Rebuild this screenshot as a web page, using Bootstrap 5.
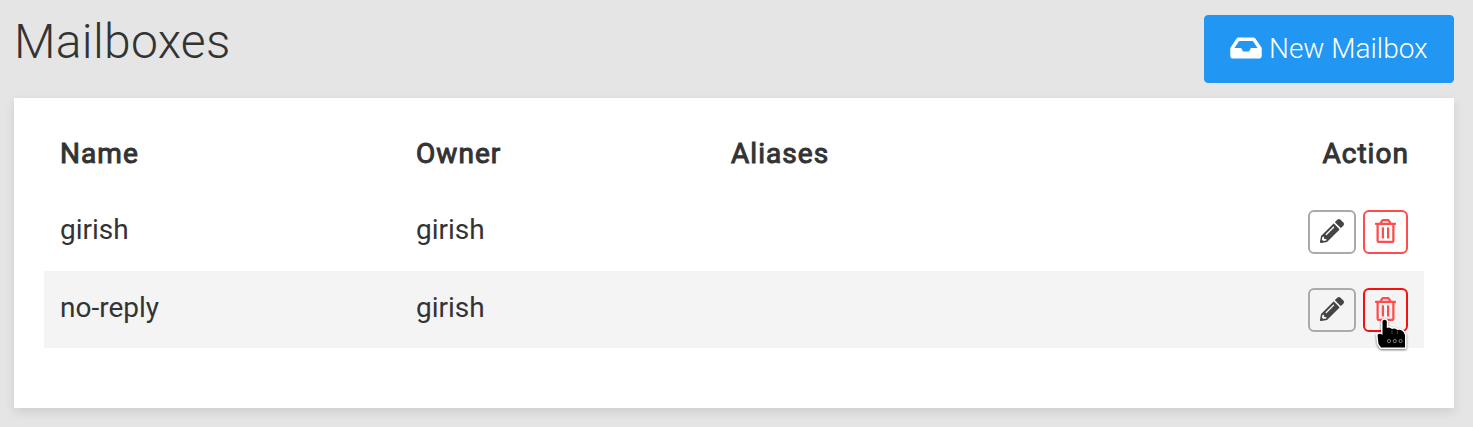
<!DOCTYPE html>
<html lang="en">
<head>
<meta charset="utf-8">
<title>Mailboxes</title>
<link href="https://cdn.jsdelivr.net/npm/bootstrap@5.3.0/dist/css/bootstrap.min.css" rel="stylesheet">
<style>
body{background:#e5e5e5;color:#333;font-family:Roboto,sans-serif;font-size:28px;line-height:40px;overflow:hidden}
.page{padding:15px 19px 19px 14px}
.page-head{height:83px}
h1{font-size:48px;font-weight:300;line-height:53px;letter-spacing:.3px}
.btn-new{--bs-btn-bg:#2196f3;--bs-btn-color:#fff;--bs-btn-border-color:#2196f3;--bs-btn-font-size:28px;--bs-btn-font-weight:300;--bs-btn-line-height:40px;--bs-btn-border-radius:4px;width:250px;height:68px;padding:0 0 0 25px;gap:7px}
.btn-new svg{margin-top:-2px}
.panel{height:310px;padding:30px;border:0;border-radius:0;box-shadow:0 4px 10px rgba(0,0,0,.1)}
.mailboxes{--bs-table-bg:transparent;--bs-table-color:#333;table-layout:fixed;color:#333}
.mailboxes th,.mailboxes td{border:0;padding:0 16px 4px;vertical-align:middle}
.mailboxes .acts{padding-bottom:0}
.mailboxes thead tr{height:65px}
.mailboxes thead th{padding-bottom:14px;font-weight:400;letter-spacing:1.05px;-webkit-text-stroke:1px #333}
.mailboxes thead th.text-end{padding-right:15px}
.mailboxes tbody tr{height:78px}
.mailboxes tbody tr.hovered{background:#f4f4f4;height:77px}
.mailboxes .hovered td{padding-bottom:3px}
.mailboxes .hovered .acts{padding-bottom:0}
.btns{gap:7px}
.btn-act{width:48px;height:44px;padding:0 0 2px;border:2px solid #aaa;border-radius:6px;color:#444;background:transparent}
.btn-del{width:45px;color:#ff4c4c;border-color:#ff4c4c}
.btn-del.hot{border-color:#f60f0f}
.hand{left:9px;top:26px;z-index:2;pointer-events:none;filter:drop-shadow(0 1px 1px rgba(0,0,0,.55))}
svg{display:block;flex:none}
</style>
</head>
<body>
<svg width="0" height="0" class="position-absolute">
<symbol id="pencil" viewBox="0 0 512 512"><path fill="currentColor" d="M497.9 142.1l-46.1 46.1c-4.7 4.7-12.3 4.7-17 0l-111-111c-4.7-4.7-4.7-12.3 0-17l46.1-46.1c18.7-18.7 49.1-18.7 67.9 0l60.1 60.1c18.8 18.7 18.8 49.1 0 67.9zM284.2 99.8L21.6 362.4.4 483.9c-2.9 16.4 11.4 30.6 27.8 27.8l121.5-21.3 262.6-262.6c4.7-4.7 4.7-12.3 0-17l-111-111c-4.8-4.7-12.4-4.7-17.1 0zM124.1 339.9c-5.5-5.5-5.5-14.3 0-19.8l154-154c5.5-5.5 14.3-5.5 19.8 0s5.5 14.3 0 19.8l-154 154c-5.5 5.5-14.3 5.5-19.8 0zM88 424h48v36.3l-64.5 11.3-31.1-31.1L51.7 376H88v48z"/></symbol>
<symbol id="trash" viewBox="0 0 448 512"><path fill="currentColor" d="M268 416h24a12 12 0 0 0 12-12V188a12 12 0 0 0-12-12h-24a12 12 0 0 0-12 12v216a12 12 0 0 0 12 12zM432 80h-82.41l-34-56.7A48 48 0 0 0 274.41 0H173.59a48 48 0 0 0-41.16 23.3L98.41 80H16A16 16 0 0 0 0 96v16a16 16 0 0 0 16 16h16v336a48 48 0 0 0 48 48h288a48 48 0 0 0 48-48V128h16a16 16 0 0 0 16-16V96a16 16 0 0 0-16-16zM171.84 50.91A6 6 0 0 1 177 48h94a6 6 0 0 1 5.15 2.91L293.61 80H154.39zM368 464H80V128h288zm-212-48h24a12 12 0 0 0 12-12V188a12 12 0 0 0-12-12h-24a12 12 0 0 0-12 12v216a12 12 0 0 0 12 12z"/></symbol>
</svg>
<main class="page">
  <header class="page-head d-flex justify-content-between align-items-start">
    <h1 class="m-0">Mailboxes</h1>
    <button class="btn btn-new d-flex align-items-center" type="button">
      <svg width="32" height="28" viewBox="0 0 576 512"><path fill="#fff" d="M567.938 243.908L462.25 85.374A48.003 48.003 0 0 0 422.311 64H153.689a48 48 0 0 0-39.938 21.374L8.062 243.908A47.994 47.994 0 0 0 0 270.533V400c0 26.51 21.49 48 48 48h480c26.51 0 48-21.49 48-48V270.533a47.994 47.994 0 0 0-8.062-26.625zM162.252 128h251.497l85.333 128H376l-32 64H232l-32-64H76.918l85.334-128z"/></svg>
      <span>New Mailbox</span>
    </button>
  </header>
  <section class="card panel">
    <table class="table mailboxes mb-0">
      <colgroup><col style="width:356px"><col style="width:315px"><col><col style="width:200px"></colgroup>
      <thead><tr><th>Name</th><th>Owner</th><th>Aliases</th><th class="text-end">Action</th></tr></thead>
      <tbody>
        <tr><td>girish</td><td>girish</td><td></td><td class="acts">
          <div class="btns d-flex justify-content-end">
            <button class="btn btn-act d-flex align-items-center justify-content-center" aria-label="Edit"><svg width="24" height="24"><use href="#pencil"/></svg></button>
            <button class="btn btn-act btn-del d-flex align-items-center justify-content-center" aria-label="Delete"><svg width="21" height="24"><use href="#trash"/></svg></button>
          </div></td></tr>
        <tr class="hovered"><td>no-reply</td><td>girish</td><td></td><td class="acts">
          <div class="btns d-flex justify-content-end">
            <button class="btn btn-act d-flex align-items-center justify-content-center" aria-label="Edit"><svg width="24" height="24"><use href="#pencil"/></svg></button>
            <button class="btn btn-act btn-del hot position-relative d-flex align-items-center justify-content-center" aria-label="Delete"><svg width="21" height="24"><use href="#trash"/></svg>
            <svg class="hand position-absolute" width="38" height="40" viewBox="0 0 38 40"><path d="M8.5 5Q10.5 2.5 12.8 5V12Q15.5 10.5 18 13Q21 11.5 23.5 14Q27 13 29.5 16L31 19V31.5H7L4.5 28L3.5 19Q5.5 16.5 8.5 19Z" fill="#000" stroke="#fff" stroke-width="3" stroke-linejoin="round" paint-order="stroke"/><g fill="none" stroke="#999" stroke-width=".8"><circle cx="15" cy="25" r="1.6"/><circle cx="20.8" cy="25" r="1.6"/><circle cx="26.6" cy="25" r="1.6"/></g><path d="M18 14v4M23.5 15v3" stroke="#666" stroke-width=".6"/></svg></button>
          </div></td></tr>
      </tbody>
    </table>
  </section>
</main>
<script src="https://cdn.jsdelivr.net/npm/bootstrap@5.3.0/dist/js/bootstrap.bundle.min.js"></script>
</body>
</html>
